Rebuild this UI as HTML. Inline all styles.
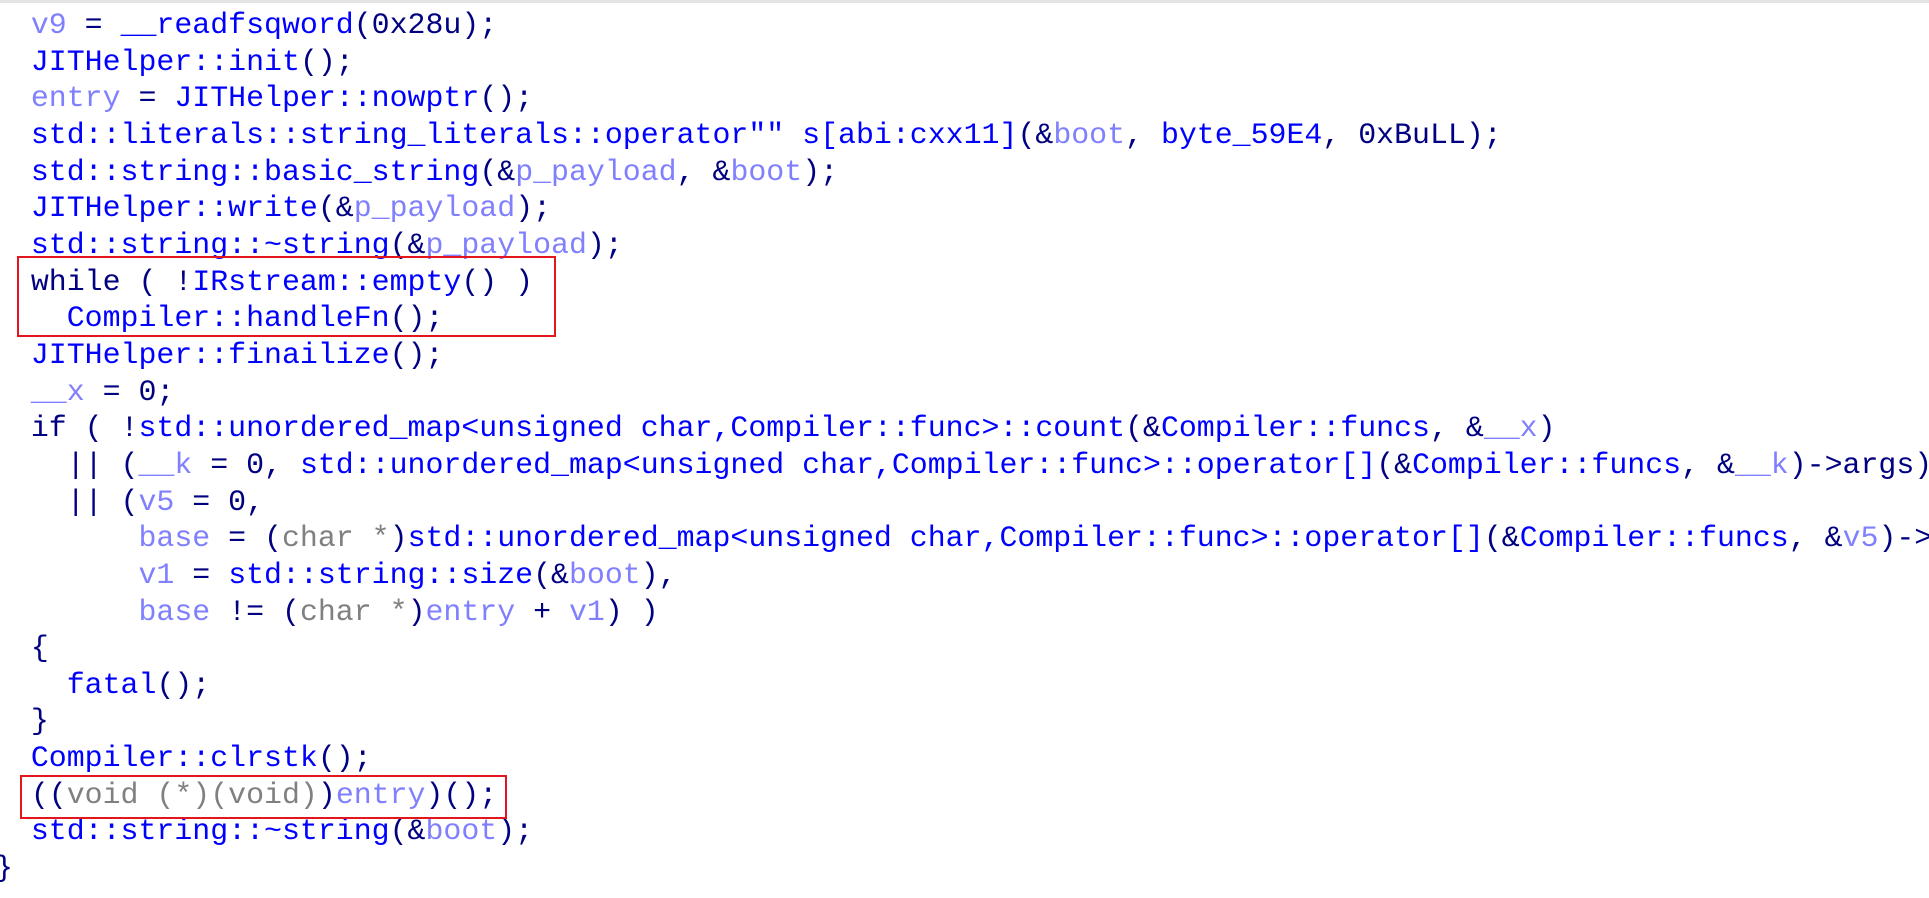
<!DOCTYPE html>
<html><head><meta charset="utf-8"><style>
html,body{margin:0;padding:0;background:#fff;width:1929px;height:898px;overflow:hidden;position:relative}
.top{position:absolute;left:0;top:0;width:1929px;height:3px;background:#e4e4e4}
pre{position:absolute;left:-5px;top:7px;margin:0;font-family:"Liberation Mono",monospace;font-size:29.9px;line-height:36.65px;color:#000080;white-space:pre}
.b{color:#0000ff}.v{color:#8080ff}.g{color:#808080}
.box{position:absolute;border:2.5px solid #e3161e;box-sizing:border-box}
</style></head><body>
<div class="top"></div>
<pre>  <span class="v">v9</span> = <span class="b">__readfsqword</span>(0x28u);
  <span class="b">JITHelper::init</span>();
  <span class="v">entry</span> = <span class="b">JITHelper::nowptr</span>();
  <span class="b">std::literals::string_literals::operator"" s[abi:cxx11]</span>(&amp;<span class="v">boot</span>, <span class="b">byte_59E4</span>, 0xBuLL);
  <span class="b">std::string::basic_string</span>(&amp;<span class="v">p_payload</span>, &amp;<span class="v">boot</span>);
  <span class="b">JITHelper::write</span>(&amp;<span class="v">p_payload</span>);
  <span class="b">std::string::~string</span>(&amp;<span class="v">p_payload</span>);
  while ( !<span class="b">IRstream::empty</span>() )
    <span class="b">Compiler::handleFn</span>();
  <span class="b">JITHelper::finailize</span>();
  <span class="v">__x</span> = 0;
  if ( !<span class="b">std::unordered_map&lt;unsigned char,Compiler::func&gt;::count</span>(&amp;<span class="b">Compiler::funcs</span>, &amp;<span class="v">__x</span>)
    || (<span class="v">__k</span> = 0, <span class="b">std::unordered_map&lt;unsigned char,Compiler::func&gt;::operator[]</span>(&amp;<span class="b">Compiler::funcs</span>, &amp;<span class="v">__k</span>)-&gt;args)
    || (<span class="v">v5</span> = 0,
        <span class="v">base</span> = (<span class="g">char *</span>)<span class="b">std::unordered_map&lt;unsigned char,Compiler::func&gt;::operator[]</span>(&amp;<span class="b">Compiler::funcs</span>, &amp;<span class="v">v5</span>)-&gt;x,
        <span class="v">v1</span> = <span class="b">std::string::size</span>(&amp;<span class="v">boot</span>),
        <span class="v">base</span> != (<span class="g">char *</span>)<span class="v">entry</span> + <span class="v">v1</span>) )
  {
    <span class="b">fatal</span>();
  }
  <span class="b">Compiler::clrstk</span>();
  ((<span class="g">void (*)(void)</span>)<span class="v">entry</span>)();
  <span class="b">std::string::~string</span>(&amp;<span class="v">boot</span>);
}</pre>
<div class="box" style="left:17px;top:256px;width:539px;height:81px"></div>
<div class="box" style="left:20px;top:775px;width:487px;height:44px"></div>
</body></html>
